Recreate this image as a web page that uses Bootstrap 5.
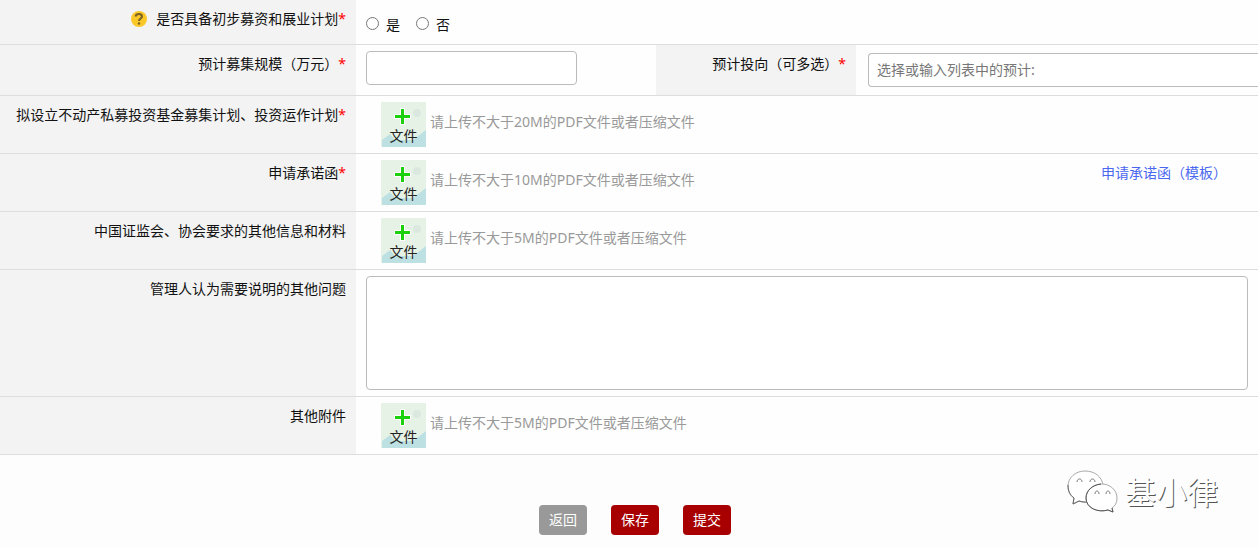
<!DOCTYPE html>
<html lang="zh-CN">
<head>
<meta charset="utf-8">
<meta name="viewport" content="width=device-width, initial-scale=1">
<title>基金募集计划</title>
<link href="https://cdn.jsdelivr.net/npm/bootstrap@5.3.0/dist/css/bootstrap.min.css" rel="stylesheet">
<style>
  body { font: 14px/20px "Noto Sans", "Noto Sans CJK SC", sans-serif; color: #111; background: #fdfdfd; }
  .form-line { border-bottom: 1px solid #ddd; }
  .line-label { flex: 0 0 356px; padding: 9px 10px 9px 0; text-align: right; background: #f3f3f3; }
  .line-label-mid { flex-basis: 200px; }
  .line-field { flex: 1 1 0; min-width: 0; padding: 6px 10px; background: #fefefe; }
  .field-scale { flex: 0 0 300px; }
  .field-invest { padding: 8px 0 8px 12px; }
  .required-star { color: #f00; }
  .form-control { font-size: 14px; line-height: 20px; padding: 6px 8px; border: 1px solid #bbb; border-radius: 4px; color: #111; }
  .form-control::placeholder { color: #777; }
  .input-scale { width: 211px; }
  .choice-line { padding: 15px 10px 9px; }
  .choice-line input { width: 13px; height: 13px; margin: 2px 7px 0 0; align-self: flex-start; }
  .upload-btn { width: 45px; height: 45px; padding: 0; border: 0; background: #e6f2e6; color: #222; }
  .upload-btn span { padding-bottom: 1px; }
  .upload-hint { color: #999; padding-bottom: 5px; }
  .upload-line { padding-left: 25px; }
  .template-link { color: #4a67f0; text-decoration: none; margin: 3px 21px 0 0; }
  .statement { height: 114px; resize: none; }
  .actions { padding: 50px 0 13px 12px; }
  .btn-act { width: 48px; padding: 5px 0; font-size: 14px; line-height: 20px; border: 0; border-radius: 4px; color: #fff; }
  .btn-back { background: #999; }
  .btn-red { background: #a80000; }
  .signature { right: 40px; top: 12px; gap: 7px; font-size: 31px; line-height: 50px; color: #fff; text-shadow: 1px 1px 0 #555; }
</style>
</head>
<body>
<svg class="d-none" aria-hidden="true">
  <symbol id="art-upload" viewBox="0 0 45 45">
    <path d="M1 45V38L9 32 14 38H32L45 28V45Z" fill="#bde1e3"/>
    <circle cx="36" cy="11" r="4" fill="#dbe8df"/>
    <path d="M19 6h5v6h6v5h-6v6h-5v-6h-6v-5h6z" fill="#fff"/>
    <path d="M20 7h3v6h6v3h-6v6h-3v-6h-6v-3h6z" fill="#1cd00e"/>
  </symbol>
</svg>

<form onsubmit="return false">
  <div class="form-line d-flex">
    <div class="line-label d-flex justify-content-end align-items-start" id="lbl-plan">
      <svg class="me-2" width="18" height="20" viewBox="0 0 18 20" aria-hidden="true">
        <circle cx="9" cy="10" r="8" fill="#fbc829"/>
        <path d="M5.500 7.500C6 4 12 4 12 7.500c0 2-3 2.200-3 4.500" fill="none" stroke="#7a6222" stroke-width="2"/>
        <circle cx="9" cy="14.500" r="1.200" fill="#7a6222"/>
      </svg>
      <span>是否具备初步募资和展业计划<span class="required-star">*</span></span>
    </div>
    <div class="line-field choice-line d-flex" role="radiogroup" aria-labelledby="lbl-plan">
      <label class="d-flex me-3" for="plan-yes"><input type="radio" name="plan" id="plan-yes">是</label>
      <label class="d-flex" for="plan-no"><input type="radio" name="plan" id="plan-no">否</label>
    </div>
  </div>

  <div class="form-line d-flex">
    <label class="line-label" for="scale">预计募集规模（万元）<span class="required-star">*</span></label>
    <div class="line-field field-scale"><input class="form-control input-scale" type="text" id="scale"></div>
    <label class="line-label line-label-mid" for="invest">预计投向（可多选）<span class="required-star">*</span></label>
    <div class="line-field field-invest"><input class="form-control border-end-0 rounded-end-0" type="text" id="invest" placeholder="选择或输入列表中的预计:"></div>
  </div>

  <div class="form-line d-flex">
    <label class="line-label" for="file-plan">拟设立不动产私募投资基金募集计划、投资运作计划<span class="required-star">*</span></label>
    <div class="line-field upload-line d-flex align-items-center gap-1">
      <button class="upload-btn position-relative d-flex align-items-end justify-content-center" type="button" id="file-plan"><svg class="position-absolute top-0 start-0 w-100 h-100" aria-hidden="true"><use href="#art-upload"/></svg><span class="position-relative">文件</span></button>
      <span class="upload-hint">请上传不大于20M的PDF文件或者压缩文件</span>
    </div>
  </div>

  <div class="form-line d-flex">
    <label class="line-label" for="file-promise">申请承诺函<span class="required-star">*</span></label>
    <div class="line-field upload-line d-flex align-items-center gap-1">
      <button class="upload-btn position-relative d-flex align-items-end justify-content-center" type="button" id="file-promise"><svg class="position-absolute top-0 start-0 w-100 h-100" aria-hidden="true"><use href="#art-upload"/></svg><span class="position-relative">文件</span></button>
      <span class="upload-hint">请上传不大于10M的PDF文件或者压缩文件</span>
      <a class="template-link ms-auto align-self-start" href="#">申请承诺函（模板）</a>
    </div>
  </div>

  <div class="form-line d-flex">
    <label class="line-label" for="file-info">中国证监会、协会要求的其他信息和材料</label>
    <div class="line-field upload-line d-flex align-items-center gap-1">
      <button class="upload-btn position-relative d-flex align-items-end justify-content-center" type="button" id="file-info"><svg class="position-absolute top-0 start-0 w-100 h-100" aria-hidden="true"><use href="#art-upload"/></svg><span class="position-relative">文件</span></button>
      <span class="upload-hint">请上传不大于5M的PDF文件或者压缩文件</span>
    </div>
  </div>

  <div class="form-line d-flex">
    <label class="line-label" for="statement">管理人认为需要说明的其他问题</label>
    <div class="line-field"><textarea class="form-control statement d-block" id="statement"></textarea></div>
  </div>

  <div class="form-line d-flex">
    <label class="line-label" for="file-other">其他附件</label>
    <div class="line-field upload-line d-flex align-items-center gap-1">
      <button class="upload-btn position-relative d-flex align-items-end justify-content-center" type="button" id="file-other"><svg class="position-absolute top-0 start-0 w-100 h-100" aria-hidden="true"><use href="#art-upload"/></svg><span class="position-relative">文件</span></button>
      <span class="upload-hint">请上传不大于5M的PDF文件或者压缩文件</span>
    </div>
  </div>

  <div class="actions position-relative d-flex justify-content-center gap-4">
    <button class="btn btn-act btn-back" type="button">返回</button>
    <button class="btn btn-act btn-red" type="button">保存</button>
    <button class="btn btn-act btn-red" type="submit">提交</button>
    <div class="signature position-absolute d-flex align-items-center">
      <svg width="51" height="44" viewBox="0 0 51 44" fill="#fff" stroke-width="1" aria-hidden="true">
        <path d="M6 34l1-6C2 25 1 20 1 16 1 8 8 1 18 1s17 6 18 14c-9 0-16 6-16 13l1 4c-3 1-6 0-9-1z" stroke="#aaa"/>
        <path d="M1 15c0 6 2 10 6 13l-1 6 6-3c3 1 6 1 8 1" fill="none" stroke="#666"/>
        <path d="M35 14c8 0 15 6 15 14 0 5-2 8-5 10l1 4-5-2c-11 3-22-2-22-12 0-8 7-14 16-14z" stroke="#aaa"/>
        <path d="M34 14c-9 1-15 7-15 14 0 10 12 15 22 12l5 2-1-4" fill="none" stroke="#555"/>
        <path d="M10 12c0-4 5-4 5 0M23 12c0-4 5-4 5 0M28 24c0-4 4-4 4 0M39 24c0-4 4-4 4 0" fill="none" stroke="#777"/>
      </svg>
      <span>基小律</span>
    </div>
  </div>
</form>
<script src="https://cdn.jsdelivr.net/npm/bootstrap@5.3.0/dist/js/bootstrap.bundle.min.js"></script>
</body>
</html>
